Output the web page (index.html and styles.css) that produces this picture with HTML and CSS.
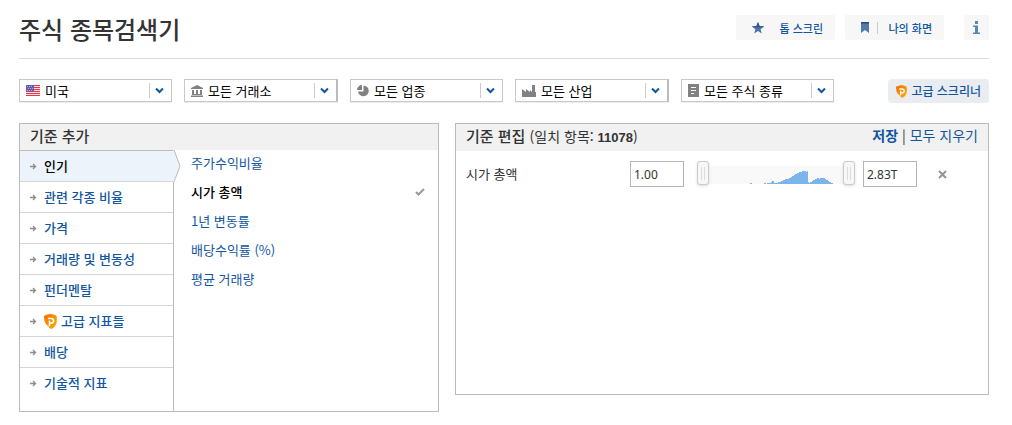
FILE: index.html
```html
<!DOCTYPE html>
<html lang="ko">
<head>
<meta charset="utf-8">
<title>주식 종목검색기</title>
<link rel="stylesheet" href="styles.css">
</head>
<body>
<svg class="defs" width="0" height="0" aria-hidden="true">
  <defs>
    <linearGradient id="orange" x1="0" y1="0" x2="1" y2="1"><stop offset="0" stop-color="#f96b00"/><stop offset="1" stop-color="#ffb000"/></linearGradient>
    <symbol id="chevron" viewBox="0 0 9 7"><path d="M1 1.5 4.5 5 8 1.5" fill="none" stroke="#1256a0" stroke-width="2"/></symbol>
    <symbol id="arrow" viewBox="0 0 7 7"><path d="M0 3.5H5.500M3 1 5.500 3.500 3 6" fill="none" stroke="#8c8c8c" stroke-width="1.3"/></symbol>
    <symbol id="shield" viewBox="0 0 13 15"><path d="M6.5 0C8.500 0 11 .8 12.500 2 13.200 5 13 9 11.500 11.500 10 13.500 8 15 7 15L5 13.500 4.800 12.500C2 11 0 8 0 2 2 .7 4.500 0 6.500 0Z" fill="url(#orange)"/><path d="M4 4.500H7.300A2.300 2.300 0 0 1 7.300 9.100H5.500M5.500 6.500V12" fill="none" stroke="#fff" stroke-width="1.600"/></symbol>
  </defs>
</svg>
<main class="page">
  <header class="top">
    <h1>주식 종목검색기</h1>
    <div class="actions">
      <button class="action" type="button">
        <svg width="12" height="12" viewBox="0 0 12 12"><path d="M6 0 7.600 4.100 12 4.400 8.600 7.200 9.700 11.500 6 9.100 2.300 11.500 3.400 7.200 0 4.400 4.400 4.100Z" fill="#4a75a8"/><path d="M6 0 7.600 4.100 12 4.400 11 5.200H1L0 4.400 4.400 4.100Z" fill="#36557f"/></svg>
        <i class="bar bar-none"></i><span>톱 스크린</span>
      </button>
      <button class="action" type="button">
        <svg width="8" height="11" viewBox="0 0 8 11"><path d="M0 0H8V11L4 8 0 11Z" fill="#4f7bad"/><path d="M0 0H8V1.500H0Z" fill="#2d4a70"/></svg>
        <i class="bar"></i><span>나의 화면</span>
      </button>
      <button class="action info" type="button" aria-label="정보">
        <svg width="7" height="13" viewBox="0 0 7 13"><path d="M2 0H5V3H2ZM0 4.500H5V11.500H7V13H0V11.500H2V6H0Z" fill="#5b87b5"/></svg>
      </button>
    </div>
  </header>

  <section class="filters">
    <label class="filter">
      <svg width="14" height="11" viewBox="0 0 14 11" shape-rendering="crispEdges"><path fill="#f8dfe2" d="M0 0H14V11H0Z"/><path fill="#e03b4d" d="M0 0H14V1H0ZM0 2H14V3H0ZM0 4H14V5H0ZM0 6H14V7H0ZM0 8H14V9H0ZM0 10H14V11H0Z"/><path fill="#5b61ad" d="M0 0H8V6H0Z"/><path fill="#a9addc" d="M1 1H2V2H1ZM3 1H4V2H3ZM5 1H6V2H5ZM2 3H3V4H2ZM4 3H5V4H4ZM6 3H7V4H6ZM1 5H2V6H1ZM3 5H4V6H3ZM5 5H6V6H5Z"/></svg>
      <select aria-label="국가"><option>미국</option></select>
      <svg class="drop" width="9" height="7"><use href="#chevron"/></svg>
    </label>
    <label class="filter">
      <svg width="12" height="12" viewBox="0 0 12 12" fill="#818181"><path d="M6 0 12 3V4H0V3ZM1 5H3V9H1ZM5 5H7V9H5ZM9 5H11V9H9ZM1 9H11V10H1ZM0 10.500H12V12H0Z"/></svg>
      <select aria-label="거래소"><option>모든 거래소</option></select>
      <svg class="drop" width="9" height="7"><use href="#chevron"/></svg>
    </label>
    <label class="filter">
      <svg width="12" height="12" viewBox="0 0 12 12" fill="#818181"><path d="M6.500 .5A5.400 5.400 0 1 1 1 6.500H6.500ZM5 0V5H0A5 5 0 0 1 5 0Z"/></svg>
      <select aria-label="업종"><option>모든 업종</option></select>
      <svg class="drop" width="9" height="7"><use href="#chevron"/></svg>
    </label>
    <label class="filter">
      <svg width="14" height="12" viewBox="0 0 14 12" fill="#818181"><path d="M0 12V4L4 7V4L8 7V5L10 7V0H13V7H14V12Z"/></svg>
      <select aria-label="산업"><option>모든 산업</option></select>
      <svg class="drop" width="9" height="7"><use href="#chevron"/></svg>
    </label>
    <label class="filter">
      <svg width="11" height="13" viewBox="0 0 11 13"><path fill="#818181" d="M0 0H11V13H0Z"/><path d="M3 3.500H8M3 6.500H8M3 9.500H6" stroke="#fff"/></svg>
      <select aria-label="주식 종류"><option>모든 주식 종류</option></select>
      <svg class="drop" width="9" height="7"><use href="#chevron"/></svg>
    </label>
    <button class="pro" type="button"><svg width="11" height="13"><use href="#shield"/></svg><span>고급 스크리너</span></button>
  </section>

  <div class="panels">
    <section class="panel">
      <h2 class="panel-head">기준 추가</h2>
      <div class="criteria">
        <nav class="menu">
          <a class="current" href="#popular"><svg width="7" height="7"><use href="#arrow"/></svg>인기<svg class="notch" width="8" height="32" viewBox="0 0 8 32"><path d="M0 0H1L7 16 1 32H0Z" fill="#ecf3fa"/><path d="M1 0 7 16 1 32" fill="none" stroke="#bbb"/></svg></a>
          <a href="#ratios"><svg width="7" height="7"><use href="#arrow"/></svg>관련 각종 비율</a>
          <a href="#price"><svg width="7" height="7"><use href="#arrow"/></svg>가격</a>
          <a href="#volume"><svg width="7" height="7"><use href="#arrow"/></svg>거래량 및 변동성</a>
          <a href="#fundamental"><svg width="7" height="7"><use href="#arrow"/></svg>펀더멘탈</a>
          <a href="#advanced"><svg width="7" height="7"><use href="#arrow"/></svg><svg class="badge" width="13" height="15"><use href="#shield"/></svg>고급 지표들</a>
          <a href="#dividend"><svg width="7" height="7"><use href="#arrow"/></svg>배당</a>
          <a href="#technical"><svg width="7" height="7"><use href="#arrow"/></svg>기술적 지표</a>
        </nav>
        <div class="options">
          <a href="#pe">주가수익비율</a>
          <a class="chosen" href="#cap">시가 총액<svg width="10" height="8" viewBox="0 0 10 8"><path d="M1 4 3.500 6.500 9 1" fill="none" stroke="#9d9d9d" stroke-width="2.200"/></svg></a>
          <a href="#change">1년 변동률</a>
          <a href="#yield">배당수익률 (%)</a>
          <a href="#avgvol">평균 거래량</a>
        </div>
      </div>
    </section>

    <section class="panel">
      <div class="panel-head edit-head">
        <h2>기준 편집 <span class="count">(일치 항목: <b>11078</b>)</span></h2>
        <div class="links"><a class="save" href="#save">저장</a> | <a href="#clear">모두 지우기</a></div>
      </div>
      <div class="rule">
        <label class="rule-name" for="min">시가 총액</label>
        <input class="value" id="min" type="text" value="1.00">
        <div class="range">
          <svg class="histogram" width="158" height="18" viewBox="0 0 158 18"><path fill="#7cb5ec" shape-rendering="crispEdges" d="M53 18V17H55V18ZM67 18V17H69V18ZM70 18V17H74V16H75V15H77V17H81V16H84V15H86V14H88V13H92V12H94V11H95V10H97V9H98V8H100V7H102V6H105V5H109V6H110V5H111V16H112V17H113V16H115V15H116V14H118V13H120V12H122V13H123V12H128V13H129V14H131V15H132V16H134V17H136V18Z"/></svg>
          <input type="range" min="0" max="100" value="0" aria-label="최소">
          <input type="range" min="0" max="100" value="100" aria-label="최대">
        </div>
        <input class="value" type="text" value="2.83T" aria-label="최대값">
        <button class="remove" type="button" aria-label="삭제"><svg width="9" height="9" viewBox="0 0 9 9"><path d="M1 1 8 8M8 1 1 8" stroke="#949494" stroke-width="2"/></svg></button>
      </div>
    </section>
  </div>
</main>
</body>
</html>
```
FILE: styles.css
```css
* { box-sizing: border-box; }
body {
  margin: 0;
  background: #fff;
  color: #333;
  font: 13px/20px "Noto Sans CJK KR", sans-serif;
}
button, input, select { font: inherit; color: inherit; }
button { border: 0; padding: 0; cursor: pointer; }
a { color: #1256a0; text-decoration: none; }
h1, h2 { margin: 0; }
.defs { display: block; }
.page { padding: 0 23px 13px 19px; }

.top {
  display: flex;
  justify-content: space-between;
  align-items: flex-start;
  height: 59px;
  padding-top: 15px;
  border-bottom: 1px solid #d9d9d9;
}
h1 { font-size: 24px; line-height: 28px; font-weight: 500; }
.actions { display: flex; gap: 10px; }
.action {
  display: flex;
  align-items: center;
  width: 99px;
  height: 25px;
  padding: 0 12px 0 16px;
  border-radius: 2px;
  background: #f7f7f7;
  color: #1256a0;
  font-size: 11px;
  font-weight: 500;
}
.action span { margin-left: auto; }
.bar { width: 1px; height: 12px; margin-left: 8px; background: #ccc; }
.bar-none { background: none; }
.action.info { width: 25px; padding: 0; margin-left: 10px; justify-content: center; }

.filters { display: flex; gap: 12px; padding-top: 20px; }
.filter {
  display: flex;
  align-items: center;
  width: 153px;
  height: 23px;
  padding: 0 7px 0 6px;
  border: 1px solid #c8c8c8;
  box-shadow: 0 1px 0 #eee;
  color: #000;
}
.filter:nth-child(even) { width: 154px; border-right: 2px solid #bbb; }
.filter > svg { flex: none; }
.filter select {
  flex: 1;
  min-width: 0;
  height: 20px;
  padding: 0;
  margin-left: 5px;
  border: 0;
  appearance: none;
  background: none;
}
.filter .drop { box-sizing: content-box; padding: 4px 0 4px 5px; border-left: 1px solid #ccc; }
.pro {
  display: flex;
  align-items: center;
  gap: 4px;
  height: 24px;
  margin-left: auto;
  padding: 0 8px;
  border-radius: 4px;
  background: #e9ecf1;
  color: #1256a0;
  font-size: 12px;
  font-weight: 500;
}

.panels {
  display: grid;
  grid-template-columns: 420fr 534fr;
  align-items: start;
  gap: 16px;
  padding-top: 20px;
}
.panel { border: 1px solid #bbb; min-height: 272px; }
.panel-head {
  padding: 0 10px 3px;
  background: #f1f1f1;
  font-size: 15px;
  line-height: 23px;
  font-weight: 500;
}
.criteria { display: flex; }
.menu {
  width: 154px;
  padding-bottom: 13px;
  border-right: 1px solid #bbb;
}
.menu a {
  display: flex;
  align-items: center;
  height: 31px;
  padding-left: 10px;
  border-top: 1px solid #d5d5d5;
  font-weight: 500;
}
.menu a > svg:first-child { margin-right: 7px; }
.menu .badge { margin-right: 4px; }
.menu .current {
  position: relative;
  border-top-color: #bbb;
  background: #ecf3fa;
  color: #000;
}
.notch { position: absolute; right: -8px; top: -1px; }
.options { flex: 1; padding: 0 13px 0 17px; }
.options a { display: flex; align-items: center; justify-content: space-between; height: 29px; padding-bottom: 4px; }
.options .chosen { color: #000; font-weight: 500; }

.edit-head { display: flex; justify-content: space-between; height: 27px; }
.edit-head h2 { font: inherit; }
.count { font-size: 14px; font-weight: 400; }
.count b { font: bold 13px "Liberation Sans", sans-serif; }
.links { font-size: 14px; font-weight: 400; }
.save { font-weight: 700; }
.rule { display: flex; align-items: center; padding: 10px 41px 0 10px; }
.rule-name { flex: 1; }
.value {
  width: 54px;
  height: 26px;
  padding: 0 3px;
  border: 1px solid #b5b5b5;
  font: 12px "Noto Sans", sans-serif;
}
.range { display: grid; align-items: center; width: 158px; margin: 0 8px 0 13px; }
.range > * { grid-area: 1 / 1; }
.histogram { margin-top: 2px; background: #f9f9f9; }
.range input {
  width: 158px;
  height: 24px;
  margin: 0 0 2px;
  appearance: none;
  background: none;
  pointer-events: none;
}
.range input::-webkit-slider-thumb {
  appearance: none;
  width: 12px;
  height: 24px;
  border: 1px solid #ccc;
  border-radius: 3px;
  background: linear-gradient(90deg, transparent 3px, #ddd 3px 4px, transparent 4px 6px, #ddd 6px 7px, transparent 7px) 0 5px / 10px 13px no-repeat #f7f7f7;
  box-shadow: 0 1px 3px #ddd;
  pointer-events: auto;
}
.remove { display: flex; margin-left: 21px; background: none; }
```
